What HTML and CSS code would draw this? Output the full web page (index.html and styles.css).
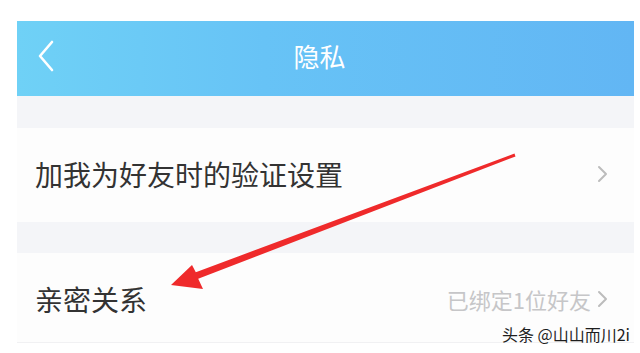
FILE: index.html
```html
<!DOCTYPE html>
<html lang="zh-CN">
<head>
<meta charset="utf-8">
<title>隐私</title>
<link rel="stylesheet" href="styles.css">
</head>
<body>
<div class="screen">
  <header class="header">
    <svg class="back" width="18" height="32" viewBox="0 0 18 32" aria-hidden="true">
      <polyline points="15,2 3,16 15,30" fill="none" stroke="#ffffff" stroke-width="2.6" stroke-linecap="round" stroke-linejoin="round"/>
    </svg>
    <div class="title">隐私</div>
  </header>
  <div class="gap gap-top"></div>
  <div class="row row-first">
    <span class="label">加我为好友时的验证设置</span>
    <span class="right">
      <svg class="chev" width="12" height="18" viewBox="0 0 12 18" aria-hidden="true">
        <polyline points="2,2 9,9 2,16" fill="none" stroke="#bcbcbc" stroke-width="2" stroke-linecap="round" stroke-linejoin="round"/>
      </svg>
    </span>
  </div>
  <div class="gap gap-mid"></div>
  <div class="row row-second">
    <span class="label">亲密关系</span>
    <span class="right">
      <span class="value">已绑定1位好友</span>
      <svg class="chev" width="12" height="18" viewBox="0 0 12 18" aria-hidden="true">
        <polyline points="2,2 9,9 2,16" fill="none" stroke="#bcbcbc" stroke-width="2" stroke-linecap="round" stroke-linejoin="round"/>
      </svg>
    </span>
  </div>
</div>
<svg class="arrow" width="640" height="353" viewBox="0 0 640 353" aria-hidden="true">
  <polygon points="171,285 192,265 195.8,272.2 514.5,153.6 515.5,156.4 198.2,278.8 203,289" fill="#ef2a2b"/>
</svg>
<div class="watermark">头条 @山山而川2i</div>
</body>
</html>
```

FILE: styles.css
```css
html, body {
  margin: 0;
  padding: 0;
  background: #ffffff;
}
body {
  width: 640px;
  height: 353px;
  overflow: hidden;
  position: relative;
  font-family: "Noto Sans CJK SC", "Noto Sans", sans-serif;
}
.screen {
  margin: 21px 6px 0 17px;
  width: 617px;
  display: flex;
  flex-direction: column;
}
.header {
  height: 75px;
  background: linear-gradient(90deg, #6fd1f6 0%, #67c3f6 40%, #62b6f4 100%);
  display: flex;
  align-items: center;
  position: relative;
  padding-bottom: 6px;
  box-sizing: border-box;
}
.back {
  margin-left: 20px;
  margin-top: 0;
}
.title {
  flex: 1;
  text-align: center;
  color: #ffffff;
  font-size: 26px;
  line-height: 30px;
  margin-right: 50px;
}
.gap {
  background: #f4f5f8;
}
.gap-top { height: 32px; }
.gap-mid { height: 31px; }
.row {
  background: #fdfdfd;
  display: flex;
  align-items: center;
  justify-content: space-between;
  padding: 0 25px 0 18px;
}
.row-first { height: 94px; padding-bottom: 2px; box-sizing: border-box; }
.row-second { height: 90px; padding-top: 2px; box-sizing: border-box; border-bottom: 1px solid #f1f1f3; }
.label {
  font-size: 28px;
  color: #333333;
  line-height: 32px;
}
.right {
  display: flex;
  align-items: center;
  gap: 6px;
}
.value {
  font-size: 22px;
  color: #c6c6c8;
  line-height: 26px;
}
.arrow {
  position: absolute;
  left: 0;
  top: 0;
}
.watermark {
  position: absolute;
  right: 10px;
  top: 324px;
  font-size: 16px;
  line-height: 20px;
  color: #1e1e1e;
  text-shadow: 0 0 1px #ffffff;
}
```
